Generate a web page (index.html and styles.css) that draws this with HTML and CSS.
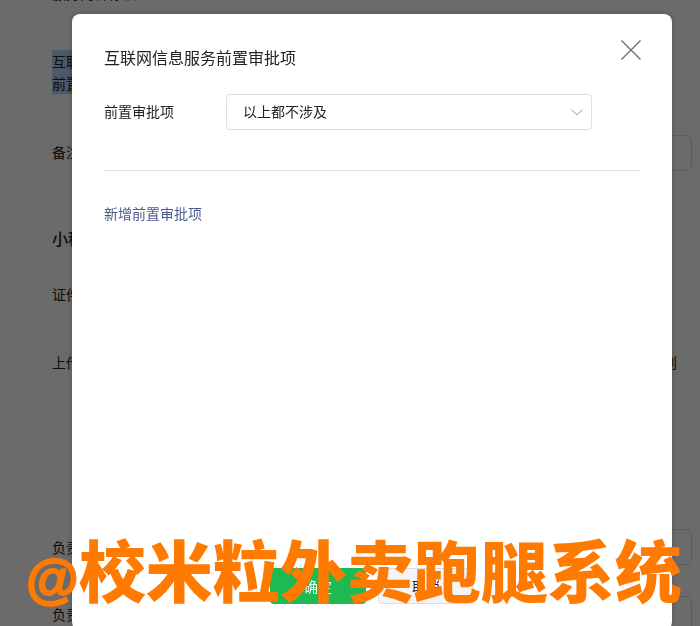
FILE: index.html
```html
<!DOCTYPE html>
<html lang="zh-CN">
<head>
<meta charset="utf-8">
<title>前置审批项</title>
<link rel="stylesheet" href="styles.css">
</head>
<body>
<main class="page">
  <div class="row row-first"><span class="label">服务内容标识</span><span class="field field-select"></span></div>
  <div class="row row-approval"><span class="label label-sel"><span>互联网信息服务</span><span>前置审批项</span></span></div>
  <div class="row row-note"><span class="label">备注</span><span class="field field-input"></span></div>
  <h2 class="section">小程序主体信息</h2>
  <div class="row row-cert"><span class="label">证件类型</span></div>
  <div class="row row-upload"><span class="label">上传证件</span><span class="tail">则</span></div>
  <div class="row row-owner"><span class="label">负责人姓名</span><span class="field field-input"></span></div>
  <div class="row row-owner2"><span class="label">负责人证件</span><span class="field field-input"></span></div>
</main>

<div class="overlay"></div>

<section class="modal">
  <button class="close" aria-label="关闭">
    <svg width="20" height="20" viewBox="0 0 20 20"><path d="M.5.5l19 19M19.500.5l-19 19" fill="none" stroke="#707070" stroke-width="1.4"/></svg>
  </button>
  <h1 class="modal-title">互联网信息服务前置审批项</h1>
  <div class="form-row">
    <span class="form-label">前置审批项</span>
    <div class="select">
      <span class="select-value">以上都不涉及</span>
      <svg width="12" height="7" viewBox="0 0 12 7"><path d="M.5.7L6 6l5.500-5.300" fill="none" stroke="#9a9a9a" stroke-width="1"/></svg>
    </div>
  </div>
  <hr class="divider">
  <a class="add-link">新增前置审批项</a>
  <div class="actions">
    <button class="btn btn-ok">确定</button>
    <button class="btn btn-cancel">取消</button>
  </div>
</section>

<div class="watermark"><span class="at">@</span>校米粒外卖跑腿系统</div>
</body>
</html>
```
FILE: styles.css
```css
* { box-sizing: border-box; }
html, body { margin: 0; height: 626px; overflow: hidden; background: #fff; }
body { font-family: "Noto Sans CJK SC", "Noto Sans", sans-serif; font-size: 14px; color: #222; }

.page { height: 626px; padding: 0 8px 0 52px; overflow: hidden; display: flex; flex-direction: column; }
.row { display: flex; align-items: flex-start; flex: none; }
.label { width: 122px; line-height: 22px; flex: none; }
.label-sel { display: flex; flex-direction: column; }
.label-sel span { background: #b3d4fc; width: 112px; }
.field { display: block; flex: 1; height: 36px; border: 1px solid #d9dce0; border-radius: 6px; }
.field-select { width: 152px; flex: none; height: 34px; }
.tail { margin-left: auto; margin-right: 15px; line-height: 22px; }

.row-first { height: 50px; margin-top: -18px; }
.row-first .field { margin-top: -20px; }
.row-approval { height: 85px; margin-top: 18px; }
.row-note { height: 36px; align-items: center; }
.row-note .label { padding-bottom: 2px; }
.section { margin: 55px 0 0; font-size: 16px; font-weight: 500; line-height: 24px; flex: none; }
.row-cert { margin-top: 33px; }
.row-upload { margin-top: 46px; }
.row-owner { margin-top: 156px; height: 36px; align-items: center; }
.row-owner2 { margin-top: 31px; height: 36px; align-items: center; }

.overlay { position: fixed; inset: 0; background: rgba(0, 0, 0, .58); }

.modal { position: fixed; left: 72px; top: 14px; width: 600px; height: 616px; padding: 31px 32px 32px; background: #fff; border-radius: 8px; display: flex; flex-direction: column; box-shadow: 0 0 6px rgba(0,0,0,.25); }
.modal-title { margin: 0; font-size: 16px; font-weight: 400; line-height: 24px; color: #222; }
.close { position: absolute; top: 26px; left: 549px; width: 20px; height: 20px; padding: 0; border: 0; background: none; display: flex; }
.form-row { display: flex; align-items: center; margin-top: 25px; }
.form-label { width: 122px; flex: none; line-height: 22px; padding-bottom: 2px; height: 24px; }
.select { width: 366px; height: 36px; padding: 0 8px 0 16px; border: 1px solid #dcdfe3; border-radius: 4px; display: flex; align-items: center; justify-content: space-between; }
.select-value { line-height: 22px; padding-bottom: 2px; height: 24px; }
.divider { width: 100%; margin: 40px 0 0; border: 0; border-top: 1px solid #dfe1e4; }
.add-link { margin-top: 31px; line-height: 22px; color: #4a5d8c; }
.actions { margin-top: auto; margin-bottom: -6px; display: flex; justify-content: center; gap: 12px; }
.btn { width: 96px; height: 36px; border-radius: 4px; font: inherit; padding: 0; }
.btn-ok { background: #1fb953; border: 0; color: #fff; }
.btn-cancel { background: #f3f5f8; border: 1px solid #d9dce0; color: #222; }

.watermark { position: fixed; left: 26px; top: 518px; font-size: 67px; line-height: 100px; font-weight: 900; color: #ff7a00; white-space: nowrap; font-family: "Noto Sans CJK SC", sans-serif; }
.at { font-family: "Liberation Sans", sans-serif; font-size: 54px; font-weight: 700; -webkit-text-stroke: 2px #ff7a00; }
```
